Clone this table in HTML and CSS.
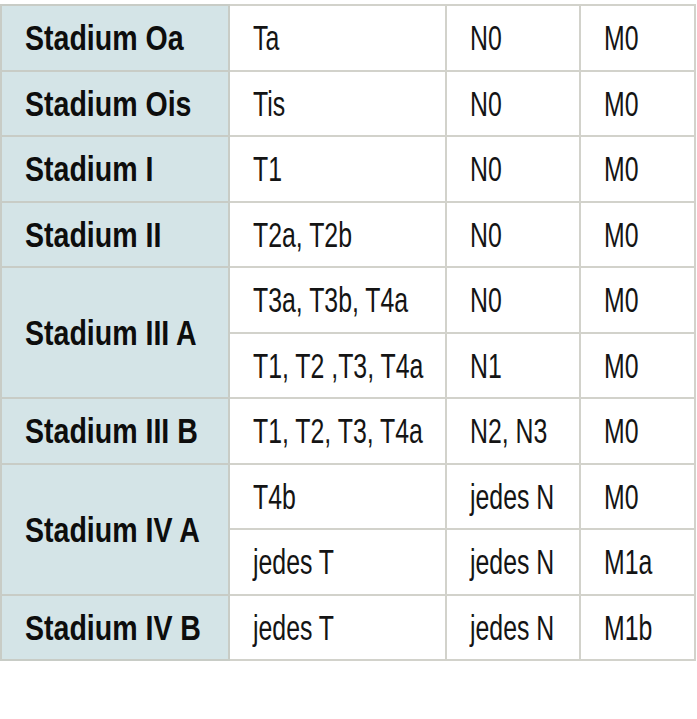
FILE: index.html
```html
<!DOCTYPE html>
<html lang="de">
<head>
<meta charset="utf-8">
<title>Stadien</title>
<link rel="stylesheet" href="styles.css">
</head>
<body>
<table class="stages">
  <colgroup>
    <col class="c1"><col class="c2"><col class="c3"><col class="c4">
  </colgroup>
  <tbody>
    <tr><th><span class="b">Stadium Oa</span></th><td><span class="r">Ta</span></td><td><span class="r">N0</span></td><td><span class="r">M0</span></td></tr>
    <tr><th><span class="b">Stadium Ois</span></th><td><span class="r">Tis</span></td><td><span class="r">N0</span></td><td><span class="r">M0</span></td></tr>
    <tr><th><span class="b">Stadium I</span></th><td><span class="r">T1</span></td><td><span class="r">N0</span></td><td><span class="r">M0</span></td></tr>
    <tr><th><span class="b">Stadium II</span></th><td><span class="r">T2a, T2b</span></td><td><span class="r">N0</span></td><td><span class="r">M0</span></td></tr>
    <tr><th rowspan="2"><span class="b">Stadium III A</span></th><td><span class="r">T3a, T3b, T4a</span></td><td><span class="r">N0</span></td><td><span class="r">M0</span></td></tr>
    <tr><td><span class="r">T1, T2 ,T3, T4a</span></td><td><span class="r">N1</span></td><td><span class="r">M0</span></td></tr>
    <tr><th><span class="b">Stadium III B</span></th><td><span class="r">T1, T2, T3, T4a</span></td><td><span class="r">N2, N3</span></td><td><span class="r">M0</span></td></tr>
    <tr><th rowspan="2"><span class="b">Stadium IV A</span></th><td><span class="r">T4b</span></td><td><span class="r">jedes N</span></td><td><span class="r">M0</span></td></tr>
    <tr><td><span class="r">jedes T</span></td><td><span class="r">jedes N</span></td><td><span class="r">M1a</span></td></tr>
    <tr><th><span class="b">Stadium IV B</span></th><td><span class="r">jedes T</span></td><td><span class="r">jedes N</span></td><td><span class="r">M1b</span></td></tr>
  </tbody>
</table>
</body>
</html>
```

FILE: styles.css
```css
html, body {
  margin: 0;
  padding: 0;
  background: #ffffff;
}

body {
  padding-top: 4px;
  font-family: "Liberation Sans", Arial, sans-serif;
  color: #141414;
}

.stages {
  border-collapse: collapse;
  table-layout: fixed;
  width: 696px;
  border: 2px solid #c3c3bb;
}

.c1 { width: 228px; }
.c2 { width: 217px; }
.c3 { width: 134px; }
.c4 { width: 115px; }

.stages tr {
  height: 65.5px;
}

.stages th,
.stages td {
  border: 2px solid #d2d2cb;
  padding: 0 0 0 23px;
  text-align: left;
  vertical-align: middle;
  white-space: nowrap;
  overflow: hidden;
  font-size: 35px;
  line-height: 1;
}

.stages th {
  background: #d4e4e7;
  font-weight: 700;
  border-color: #c8ccc6;
  color: #0d0d0d;
}

.b,
.r {
  display: inline-block;
  transform-origin: left center;
}

.b {
  transform: scaleX(0.815);
}

.r {
  font-weight: 400;
  transform: scaleX(0.71);
}
```
